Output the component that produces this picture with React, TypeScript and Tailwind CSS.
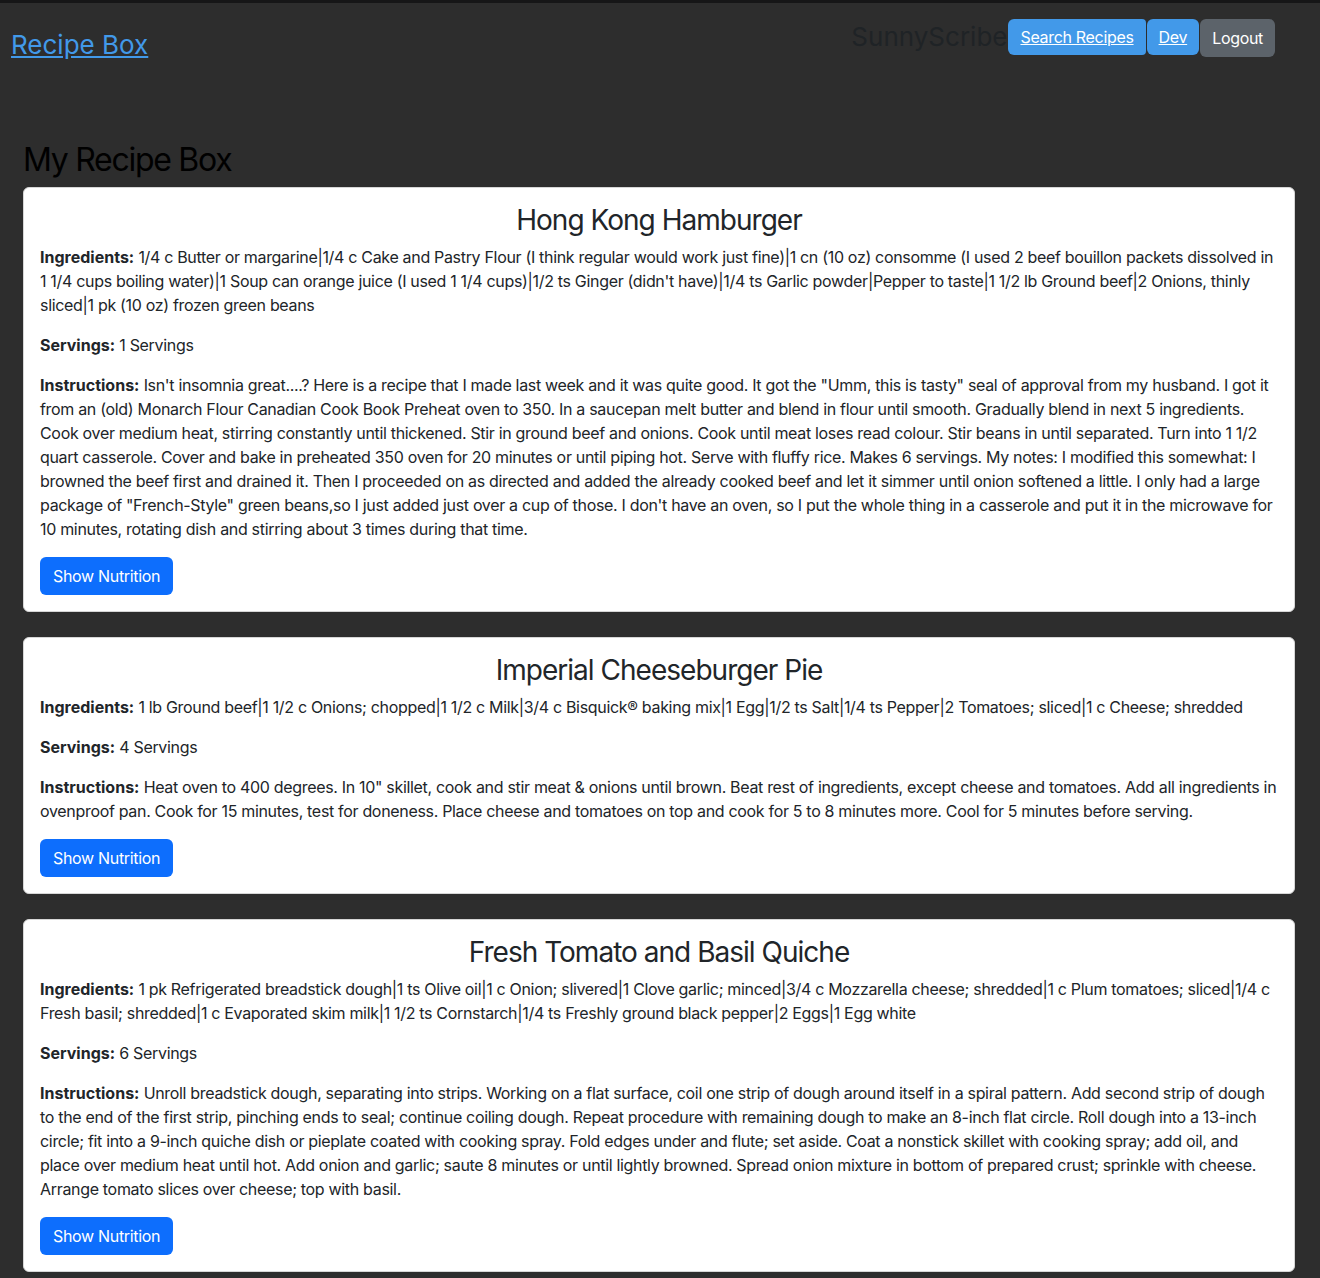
import React from 'react'

type Recipe = {
  title: string
  ingredients: string
  servings: string
  instructions: string
}

const recipes: Recipe[] = [
  {
    title: 'Hong Kong Hamburger',
    ingredients:
      "1/4 c Butter or margarine|1/4 c Cake and Pastry Flour (I think regular would work just fine)|1 cn (10 oz) consomme (I used 2 beef bouillon packets dissolved in 1 1/4 cups boiling water)|1 Soup can orange juice (I used 1 1/4 cups)|1/2 ts Ginger (didn't have)|1/4 ts Garlic powder|Pepper to taste|1 1/2 lb Ground beef|2 Onions, thinly sliced|1 pk (10 oz) frozen green beans",
    servings: '1 Servings',
    instructions:
      'Isn\'t insomnia great....? Here is a recipe that I made last week and it was quite good. It got the "Umm, this is tasty" seal of approval from my husband. I got it from an (old) Monarch Flour Canadian Cook Book Preheat oven to 350. In a saucepan melt butter and blend in flour until smooth. Gradually blend in next 5 ingredients. Cook over medium heat, stirring constantly until thickened. Stir in ground beef and onions. Cook until meat loses read colour. Stir beans in until separated. Turn into 1 1/2 quart casserole. Cover and bake in preheated 350 oven for 20 minutes or until piping hot. Serve with fluffy rice. Makes 6 servings. My notes: I modified this somewhat: I browned the beef first and drained it. Then I proceeded on as directed and added the already cooked beef and let it simmer until onion softened a little. I only had a large package of "French-Style" green beans,so I just added just over a cup of those. I don\'t have an oven, so I put the whole thing in a casserole and put it in the microwave for 10 minutes, rotating dish and stirring about 3 times during that time.',
  },
  {
    title: 'Imperial Cheeseburger Pie',
    ingredients:
      '1 lb Ground beef|1 1/2 c Onions; chopped|1 1/2 c Milk|3/4 c Bisquick® baking mix|1 Egg|1/2 ts Salt|1/4 ts Pepper|2 Tomatoes; sliced|1 c Cheese; shredded',
    servings: '4 Servings',
    instructions:
      'Heat oven to 400 degrees. In 10" skillet, cook and stir meat & onions until brown. Beat rest of ingredients, except cheese and tomatoes. Add all ingredients in ovenproof pan. Cook for 15 minutes, test for doneness. Place cheese and tomatoes on top and cook for 5 to 8 minutes more. Cool for 5 minutes before serving.',
  },
  {
    title: 'Fresh Tomato and Basil Quiche',
    ingredients:
      '1 pk Refrigerated breadstick dough|1 ts Olive oil|1 c Onion; slivered|1 Clove garlic; minced|3/4 c Mozzarella cheese; shredded|1 c Plum tomatoes; sliced|1/4 c Fresh basil; shredded|1 c Evaporated skim milk|1 1/2 ts Cornstarch|1/4 ts Freshly ground black pepper|2 Eggs|1 Egg white',
    servings: '6 Servings',
    instructions:
      'Unroll breadstick dough, separating into strips. Working on a flat surface, coil one strip of dough around itself in a spiral pattern. Add second strip of dough to the end of the first strip, pinching ends to seal; continue coiling dough. Repeat procedure with remaining dough to make an 8-inch flat circle. Roll dough into a 13-inch circle; fit into a 9-inch quiche dish or pieplate coated with cooking spray. Fold edges under and flute; set aside. Coat a nonstick skillet with cooking spray; add oil, and place over medium heat until hot. Add onion and garlic; saute 8 minutes or until lightly browned. Spread onion mixture in bottom of prepared crust; sprinkle with cheese. Arrange tomato slices over cheese; top with basil.',
  },
]

const RecipeCard = ({ recipe }: { recipe: Recipe }) => (
  <div className="bg-white border border-[#d6d6d6] rounded-md p-4 mb-[25px]">
    <h3 className="text-[28px] leading-[33px] text-center mb-2 font-normal tracking-[-0.035em]">{recipe.title}</h3>
    <p className="mb-4">
      <strong className="font-bold tracking-normal">Ingredients:</strong> {recipe.ingredients}
    </p>
    <p className="mb-4">
      <strong className="font-bold tracking-normal">Servings:</strong> {recipe.servings}
    </p>
    <p className="mb-4">
      <strong className="font-bold tracking-normal">Instructions:</strong> {recipe.instructions}
    </p>
    <button className="bg-[#0d6efd] text-white rounded-md px-[13px] h-[38px] text-base">
      Show Nutrition
    </button>
  </div>
)

export default function App() {
  return (
    <div
      className="min-h-screen bg-[#2d2d2d] text-[#212529] text-base leading-6 tracking-[-0.02em]"
      style={{ fontFamily: 'Inter, "Noto Sans", sans-serif' }}
    >
      <div className="h-[3px] bg-[#161617]" />
      <header className="flex items-start justify-between h-[97px]">
        <a href="#" className="ml-[11px] mt-[24px] text-[26px] leading-[36px] text-[#4299e9] underline tracking-normal">
          Recipe Box
        </a>
        <nav className="flex items-center mt-[14px] mr-[45px]">
          <span className="text-[26px] leading-[36px] text-[#1f2326] mr-px tracking-normal">SunnyScribe</span>
          <a href="#" className="bg-[#4299e9] text-white underline rounded-l-md rounded-r-sm px-3 h-[36px] flex items-center">
            Search Recipes
          </a>
          <a href="#" className="bg-[#4299e9] text-white underline rounded-md px-3 h-[36px] flex items-center ml-px">
            Dev
          </a>
          <button className="bg-[#5c636a] text-white rounded-md px-3 h-[38px] ml-px mt-[2px]">Logout</button>
        </nav>
      </header>
      <main className="ml-[23px] w-[1272px] pt-[41px]">
        <h2 className="text-[32px] leading-[1.2] mb-2 text-black tracking-[-0.04em]">My Recipe Box</h2>
        {recipes.map((r, i) => (
          <RecipeCard key={i} recipe={r} />
        ))}
      </main>
    </div>
  )
}
